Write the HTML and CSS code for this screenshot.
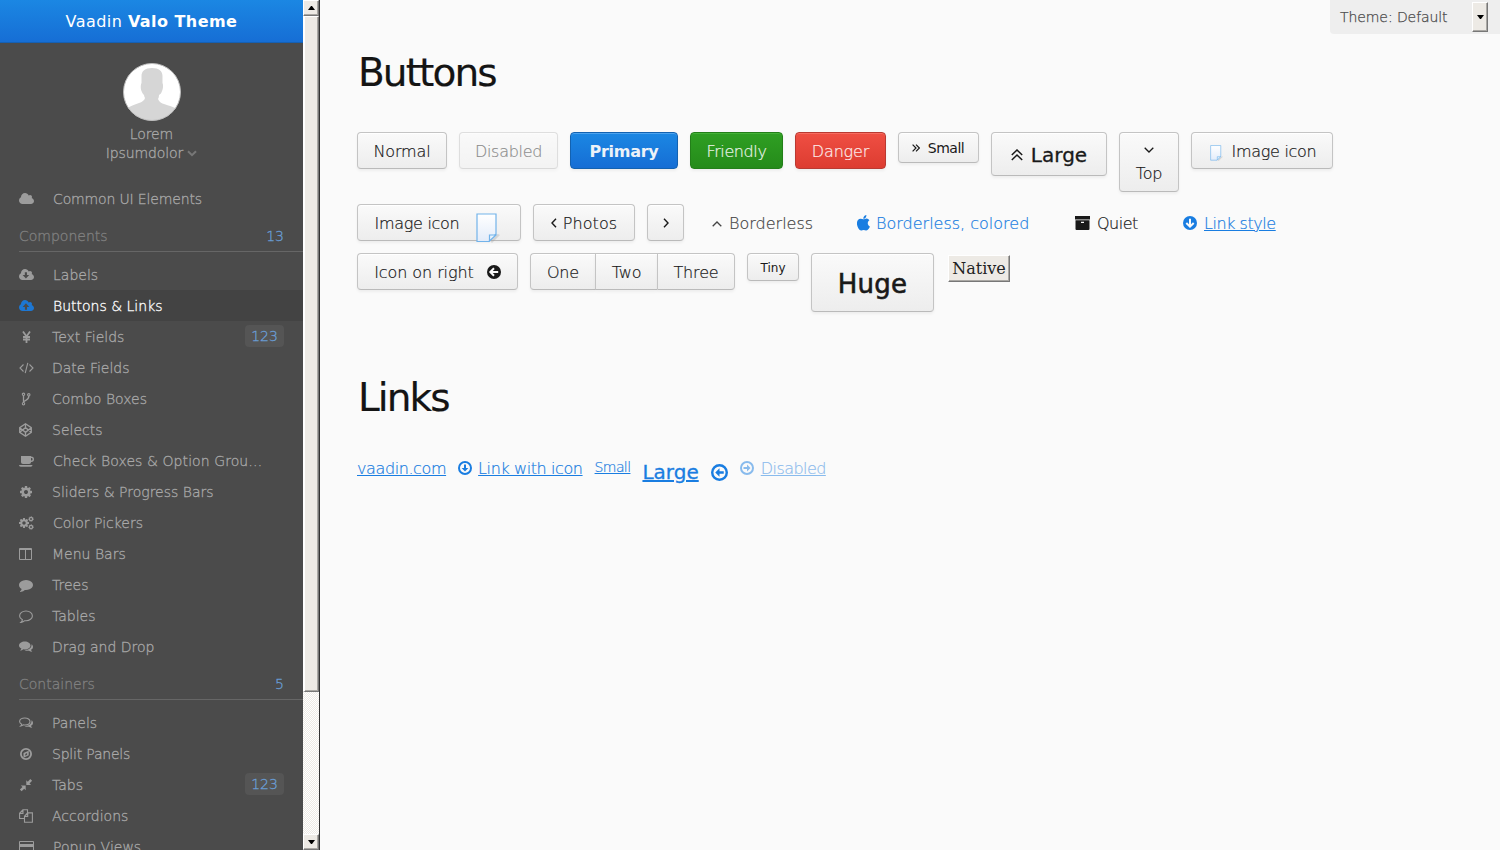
FILE: index.html
```html
<!DOCTYPE html>
<html lang="en">
<head>
<meta charset="utf-8">
<title>Vaadin Valo Theme</title>
<link rel="stylesheet" href="styles.css">
</head>
<body>
<svg class="sprite" width="0" height="0">
  <defs>
  <symbol id="cloud" viewBox="64 0 1920 1792"><path id="cloudp" d="M1984 1152q0 159-112.500 271.500t-271.500 112.500h-1088q-185 0-316.500-131.500t-131.500-316.500q0-132 71-241.500t187-163.500q-2-28-2-43 0-212 150-362t362-150q158 0 286.500 88t187.500 230q70-62 166-62 106 0 181 75t75 181q0 75-41 138 129 30 213 134.500t84 239.500z"/></symbol>
  <symbol id="cloud-down" viewBox="64 0 1920 1792"><use href="#cloudp"/><path class="cut" d="M810 540h270v360h290l-420 450-420-450h280z"/></symbol>
  <symbol id="cloud-up" viewBox="64 0 1920 1792"><use href="#cloudp"/><path class="cut" d="M820 1370h270V1010h290L955 540 530 1010h290z"/></symbol>
  <symbol id="yen" viewBox="0 0 15 14"><path class="ln" stroke-width="1.800" d="M4 1.500l3.500 5 3.500-5M7.500 6.500v6.500M4 7h7M4 9.500h7"/></symbol>
  <symbol id="code" viewBox="0 0 15 14"><path class="ln" stroke-width="1.100" d="M4.500 3.500L1 7l3.500 3.500M10.500 3.500L14 7l-3.500 3.500M8.800 1.800l-2.600 10.400"/></symbol>
  <symbol id="fork" viewBox="0 0 15 14"><path class="ln" stroke-width="1.300" d="M4.500 3.500v7M9.800 4c0 3-1 3.500-3 4.300-1.300.5-2.300 1-2.300 2.400"/><g class="ln" stroke-width="1.100"><circle cx="4.500" cy="2.300" r="1.200"/><circle cx="9.800" cy="2.800" r="1.200"/><circle cx="4.500" cy="11.700" r="1.200"/></g></symbol>
  <symbol id="codepen" viewBox="0 0 15 14"><path class="ln" stroke-width="1.300" d="M6.500.800l5.800 3.900v4.600l-5.800 3.900-5.800-3.900V4.700zM6.500.800v3.900M6.500 9.300v3.900M.700 4.700l5.800 4.600 5.800-4.600M.700 9.300l5.800-4.600 5.800 4.600"/></symbol>
  <symbol id="coffee" viewBox="0 0 15 14"><path d="M2 2h10v6.200q0 1.800-1.800 1.800H4Q2 10 2 8.200zM0 11h13.500q0 1.800-1.800 1.800H1.800Q0 12.800 0 11z"/><path class="ln" stroke-width="1.400" d="M11.500 3.200h.8a2 2 0 0 1 0 4h-.8"/></symbol>
  <symbol id="cog" viewBox="128 128 1536 1536"><path d="M1152 896q0-106-75-181t-181-75-181 75-75 181 75 181 181 75 181-75 75-181zm512-109v222q0 12-8 23t-20 13l-185 28q-19 54-39 91 35 50 107 138 10 12 10 25t-9 23q-27 37-99 108t-94 71q-12 0-26-9l-138-108q-44 23-91 38-16 136-29 186-7 28-36 28h-222q-14 0-24.500-8.500t-11.500-21.500l-28-184q-49-16-90-37l-141 107q-10 9-25 9-14 0-25-11-126-114-165-168-7-10-7-23 0-12 8-23 15-21 51-66.500t54-70.500q-27-50-41-99l-183-27q-13-2-21-12.500t-8-23.500v-222q0-12 8-23t19-13l186-28q14-46 39-92-40-57-107-138-10-12-10-24 0-10 9-23 26-36 98.500-107.500t94.500-71.500q13 0 26 10l138 107q44-23 91-38 16-136 29-186 7-28 36-28h222q14 0 24.500 8.500t11.500 21.500l28 184q49 16 90 37l142-107q9-9 24-9 13 0 25 10 129 119 165 170 7 8 7 22 0 12-8 23-15 21-51 66.500t-54 70.500q26 50 41 98l183 28q13 2 21 12.500t8 23.500z"/></symbol>
  <symbol id="gears" viewBox="0 0 15 14"><use href="#cog" x="0" y="2" width="10" height="10"/><g class="ln"><circle cx="12" cy="3" r="1.600" stroke-width="1.300"/><circle cx="12" cy="11" r="1.600" stroke-width="1.300"/><circle cx="12" cy="3" r="2.400" stroke-width=".8" stroke-dasharray="1 1"/><circle cx="12" cy="11" r="2.400" stroke-width=".8" stroke-dasharray="1 1"/></g></symbol>
  <symbol id="columns" viewBox="0 0 15 14"><path fill-rule="evenodd" d="M1 1h11q1 0 1 1v10q0 1-1 1H1q-1 0-1-1V2q0-1 1-1zm0 2v9h5V3zm6 0v9h5V3z"/></symbol>
  <symbol id="comment" viewBox="0 0 1920 1792"><path d="M1792 896q0 174-120 321.500t-326 233-450 85.500q-70 0-145-8-198 175-460 242-49 14-114 22-17 2-30.500-9t-17.500-29v-1q-3-4-.5-12t2-10 4.500-9.500l6-9 7-8.500 8-9q7-8 31-34.500t34.500-38 31-39.500 32.500-51 27-59 26-76q-157-89-247.500-220t-90.500-281q0-130 71-248.500t191-204.500 286-136.500 348-50.500q244 0 450 85.500t326 233 120 321.500z"/></symbol>
  <symbol id="comment-o" viewBox="0 0 15 14"><path class="ln" stroke-width="1.100" d="M7 2c3.600 0 6.400 2.200 6.400 4.900S10.600 11.700 7 11.700H5.800c-1.200 1-2.500 1.600-4 1.800 1-.9 1.500-1.700 1.600-2.800C1.600 9.800.6 8.500.6 6.900.6 4.200 3.400 2 7 2z"/></symbol>
  <symbol id="comments" viewBox="0 0 15 14"><path d="M5.800 1.500c3.200 0 5.700 1.700 5.700 4s-2.500 4-5.700 4c-.5 0-1-.1-1.400-.2-1 .8-2 1.200-3.400 1.200.8-.6 1.300-1.200 1.400-2C1 7.800 0 6.800 0 5.500c0-2.300 2.600-4 5.800-4zM12.500 4.200c1 .7 1.500 1.600 1.500 2.700 0 1.200-.8 2.200-2 2.900.1.900.6 1.400 1.300 2-1.400 0-2.500-.4-3.400-1.100-1.600.3-3 .1-4.300-.5 4-.1 7.300-2.400 6.900-6z"/></symbol>
  <symbol id="comments-o" viewBox="0 0 15 14"><path class="ln" stroke-width="1.100" d="M5.800 2c3 0 5.200 1.500 5.200 3.500S8.800 9 5.800 9c-.5 0-1 0-1.500-.1-.8.600-1.500.9-2.500 1.100.5-.5.900-1.100.9-1.800C1.300 7.500.6 6.600.6 5.500.6 3.500 2.800 2 5.800 2z"/><path d="M12.500 4.200c1 .7 1.500 1.600 1.500 2.700 0 1.200-.8 2.200-2 2.900.1.900.6 1.400 1.300 2-1.400 0-2.500-.4-3.400-1.100-1.600.3-3 .1-4.300-.5 4-.1 7.300-2.400 6.900-6z"/></symbol>
  <symbol id="compass" viewBox="0 0 15 14"><circle class="ln" stroke-width="1.800" cx="7" cy="7" r="5.100"/><path fill-rule="evenodd" d="M9.700 3.700v4.600l-5.200 2.400V6.100zM6.300 7.100v1.700l1.800-1V6.100z"/></symbol>
  <symbol id="compress" viewBox="0 0 15 14"><path d="M7.300 2.200v4.800h4.800L10.500 5.400l2.600-2.600-1.800-1.800-2.500 2.700zM6.700 12.200v-4.800h-4.800l1.600 1.600-2.600 2.500 1.700 1.700 2.600-2.500z"/></symbol>
  <symbol id="copy" viewBox="0 0 15 14"><path class="ln" stroke-width="1.100" d="M5 9.500H.6V4.200L3.900.8h4.600V4M4 .8V4.400H.6M8.600 3.900h4.800v9.300H5.500V7.200zM8.700 4v3.400H5.500"/></symbol>
  <symbol id="card" viewBox="0 0 15 14"><path fill-rule="evenodd" d="M1 1h13q1 0 1 1v10q0 1-1 1H1q-1 0-1-1V2q0-1 1-1zm0 1v2h13V2zm0 5v5h13V7z"/></symbol>
  <symbol id="down" viewBox="0 0 14 14"><circle cx="7" cy="7" r="7"/><path class="lnw" d="M7 2.800v7.500M3.300 7L7 10.700 10.700 7"/></symbol>
  <symbol id="left" viewBox="0 0 14 14"><circle cx="7" cy="7" r="7"/><path class="lnw" d="M11.200 7H3.700M7 3.300L3.300 7 7 10.700"/></symbol>
  <symbol id="o-down" viewBox="0 0 14 14"><circle class="ln" stroke-width="2" cx="7" cy="7" r="6"/><path d="M6 3.500h2V7h2.400L7 10.500 3.600 7H6z"/></symbol>
  <symbol id="o-left" viewBox="0 0 14 14"><circle class="ln" stroke-width="2" cx="7" cy="7" r="6"/><path d="M10.500 6v2H7v2.400L3.500 7 7 3.600V6z"/></symbol>
  <symbol id="o-right" viewBox="0 0 14 14"><circle class="ln" stroke-width="2" cx="7" cy="7" r="6"/><path d="M3.500 6v2H7v2.400L10.500 7 7 3.600V6z"/></symbol>
  <symbol id="apple" viewBox="200 0 1400 1700"><path d="M1585 1215q-39 125-123 250-129 196-257 196-49 0-140-32-86-32-151-32-61 0-142 33-81 34-132 34-152 0-301-259-147-261-147-503 0-228 113-374 113-144 284-144 72 0 177 30 104 30 138 30 45 0 143-34 102-34 173-34 119 0 213 65 52 36 104 100-79 67-114 118-65 94-65 207 0 124 69 223t158 126zm-376-1173q0 61-29 136-30 75-93 138-54 54-108 72-37 11-104 17 3-149 78-257 74-107 250-148 1 3 2.500 11t2.500 11q0 4 .5 10t.5 10z"/></symbol>
  <symbol id="archive" viewBox="0 0 15 14"><path fill-rule="evenodd" d="M0 0h15v3.500H0zM.5 4.200h14V13q0 1-1 1h-12q-1 0-1-1zM6 5.700v1.200h3V5.700z"/></symbol>
  <symbol id="page" viewBox="0 0 24 30"><path d="M14 28l8-7 2 1-8 8z" fill="#999" opacity=".3"/><path d="M1 1h19v20l-7 7.500H1z" fill="url(#pg)" stroke="#72b3ea" stroke-width="1.200"/><path d="M13.500 28v-6H20z" fill="#e8f3fc" stroke="#72b3ea" stroke-width="1.200"/></symbol>
  <linearGradient id="pg" x2="0" y2="1"><stop stop-color="#fff"/><stop offset="1" stop-color="#e3ecfa"/></linearGradient>
  </defs>
</svg>
<div class="app">
  <aside class="side">
    <div class="menu">
      <div class="title"><span>Vaadin <b>Valo Theme</b></span></div>
      <div class="user">
        <svg class="avatar" viewBox="0 0 58 58"><defs><clipPath id="av"><circle cx="29" cy="29" r="28.500"/></clipPath></defs><circle cx="29" cy="29" r="28.500" fill="#fff"/><path clip-path="url(#av)" fill="#d6d6d6" d="M29 5c7 0 10.500 3 10.500 8v7c1 2 .5 6-.5 8-.5 2-1.500 3-3 4 0 2-.5 3-1 4 1 3 4 4.500 6 5 5 1.500 9 3 13 5V60H4V45c4-2 8-3.500 12-5 3-1 5.500-2.500 6-5-.5-1-1-2-1-3-1.500-1-2-3-2.500-4-1-2-1-6 0-8v-7c0-5 3.500-8 10.500-8z"/><circle cx="29" cy="29" r="28.500" fill="none" stroke="#bbb"/></svg>
        <div>Lorem</div>
        <div class="drop">Ipsumdolor <svg width="10" height="7" viewBox="0 0 10 7"><path class="ln" stroke-width="2" d="M1 1.200l4 4 4-4"/></svg></div>
      </div>
      <div class="item first"><svg><use href="#cloud"/></svg><span>Common UI Elements</span></div>
      <div class="sec"><span>Components</span><i>13</i></div>
      <div class="item"><svg><use href="#cloud-down"/></svg><span>Labels</span></div>
      <div class="item on"><svg><use href="#cloud-up"/></svg><span>Buttons &amp; Links</span></div>
      <div class="item n"><svg><use href="#yen"/></svg><span>Text Fields</span><em>123</em></div>
      <div class="item n"><svg><use href="#code"/></svg><span>Date Fields</span></div>
      <div class="item n"><svg><use href="#fork"/></svg><span>Combo Boxes</span></div>
      <div class="item n"><svg><use href="#codepen"/></svg><span>Selects</span></div>
      <div class="item"><svg><use href="#coffee"/></svg><span class="wide">Check Boxes &amp; Option Grou…</span></div>
      <div class="item n"><svg><use href="#cog" x="1" y="1" width="12" height="12"/></svg><span>Sliders &amp; Progress Bars</span></div>
      <div class="item"><svg><use href="#gears"/></svg><span>Color Pickers</span></div>
      <div class="item n"><svg><use href="#columns"/></svg><span>Menu Bars</span></div>
      <div class="item n"><svg><use href="#comment"/></svg><span>Trees</span></div>
      <div class="item n"><svg><use href="#comment-o"/></svg><span>Tables</span></div>
      <div class="item n"><svg><use href="#comments"/></svg><span>Drag and Drop</span></div>
      <div class="sec"><span>Containers</span><i>5</i></div>
      <div class="item n"><svg><use href="#comments-o"/></svg><span>Panels</span></div>
      <div class="item n tight"><svg><use href="#compass"/></svg><span>Split Panels</span></div>
      <div class="item n"><svg><use href="#compress"/></svg><span>Tabs</span><em>123</em></div>
      <div class="item n"><svg><use href="#copy"/></svg><span>Accordions</span></div>
      <div class="item"><svg><use href="#card"/></svg><span>Popup Views</span></div>
    </div>
    <div class="scroll">
      <div class="arrow"><svg width="7" height="4"><path d="M3 0h1l3 4H0z"/></svg></div>
      <div class="thumb"></div>
      <div class="arrow end"><svg width="7" height="4"><path d="M3 4h1l3-4H0z"/></svg></div>
    </div>
  </aside>
  <main class="main">
    <div class="theme"><span>Theme: Default</span><div class="dd"><svg width="7" height="4"><path d="M3 4h1l3-4H0z"/></svg></div></div>
    <h1>Buttons</h1>
    <div class="row r1">
      <div class="btn b-normal">Normal</div>
      <div class="btn b-disabled">Disabled</div>
      <div class="btn b-primary">Primary</div>
      <div class="btn b-friendly">Friendly</div>
      <div class="btn b-danger">Danger</div>
      <div class="btn b-small"><svg width="8" height="8" viewBox="0 0 8 8"><path class="ln" stroke-width="1.200" d="M.6.600L4 4 .6 7.400M4 .6L7.400 4 4 7.400"/></svg>Small</div>
      <div class="btn b-large"><svg width="12" height="12" viewBox="0 0 12 12"><path class="ln" stroke-width="1.500" d="M.800 6L6 1l5.200 5M.800 11L6 6l5.200 5"/></svg>Large</div>
      <div class="btn b-top"><svg width="10" height="6" viewBox="0 0 10 6"><path class="ln" stroke-width="1.300" d="M.700.800L5 5 9.300.800"/></svg><span>Top</span></div>
      <div class="btn b-img"><svg width="13" height="16"><use href="#page"/></svg>Image icon</div>
    </div>
    <div class="row r2">
      <div class="btn b-img2">Image icon<svg width="24" height="30"><use href="#page"/></svg></div>
      <div class="btn b-photos"><svg width="6" height="10" viewBox="0 0 6 10"><path class="ln" stroke-width="1.400" d="M5 .800L1 5l4 4.200"/></svg>Photos</div>
      <div class="btn b-next"><svg width="6" height="10" viewBox="0 0 6 10"><path class="ln" stroke-width="1.400" d="M1 .800L5 5 1 9.200"/></svg></div>
      <div class="flat f1"><svg width="10" height="6" viewBox="0 0 10 6"><path class="ln" stroke-width="1.300" d="M.700 5.200L5 1l4.300 4.200"/></svg><span>Borderless</span></div>
      <div class="flat f2"><svg width="13" height="16"><use href="#apple"/></svg><span>Borderless, colored</span></div>
      <div class="flat f3"><svg width="15" height="14"><use href="#archive"/></svg><span>Quiet</span></div>
      <div class="flat f4"><svg width="14" height="14"><use href="#down"/></svg><u>Link style</u></div>
    </div>
    <div class="row r3">
      <div class="btn b-right">Icon on right<svg width="14" height="14"><use href="#left"/></svg></div>
      <div class="group"><div class="btn">One</div><div class="btn">Two</div><div class="btn">Three</div></div>
      <div class="btn b-tiny">Tiny</div>
      <div class="btn b-huge">Huge</div>
      <div class="native">Native</div>
    </div>
    <h1 class="h-links">Links</h1>
    <div class="links">
      <u class="l1">vaadin.com</u>
      <svg class="i1" width="14" height="14"><use href="#o-down"/></svg><u class="l2">Link with icon</u>
      <u class="l3">Small</u>
      <u class="l4">Large</u><svg class="i2" width="17" height="17"><use href="#o-left"/></svg>
      <svg class="i3 dim" width="14" height="14"><use href="#o-right"/></svg><u class="l5 dim">Disabled</u>
    </div>
  </main>
</div>
</body>
</html>
```
FILE: styles.css
```css
* { box-sizing: border-box; }
body { margin: 0; background: #fafafa; font-family: "DejaVu Sans", sans-serif; font-weight: 200; overflow: hidden; }
.sprite { position: absolute; }
svg { display: block; flex: none; fill: currentColor; }
.ln { fill: none; stroke: currentColor; }
.lnw { fill: none; stroke: #fafafa; stroke-width: 2; }
.cut { fill: #4b4b4b; }
.app { display: flex; width: 1500px; height: 850px; overflow: hidden; }
.side { display: flex; width: 320px; flex: none; background: #4b4b4b; height: 850px; }
.menu { width: 303px; height: 850px; overflow: hidden; color: #a8a8a8; font-size: 14px; -webkit-text-stroke: .3px currentColor; }
.title { height: 43px; background: linear-gradient(#1b87e3, #166ed5); border-bottom: 1px solid #1660b2; color: #fff; font-size: 16px; font-weight: 400; text-align: center; line-height: 44px; letter-spacing: .45px; -webkit-text-stroke: 0; }
.title b { font-weight: 700; }
.user { height: 140px; padding-top: 20px; text-align: center; line-height: 19px; letter-spacing: -.1px; }
.avatar { width: 58px; height: 58px; margin: 0 auto 4px 123px; }
.drop { display: flex; justify-content: center; align-items: center; gap: 4px; }
.drop svg { color: #777; }
.item { display: flex; align-items: center; height: 31px; padding: 0 19px; white-space: nowrap; }
.item svg { width: 15px; height: 14px; margin-right: 19px; color: #9c9c9c; }
.item.n svg { margin-right: 18px; }
.first { letter-spacing: -.15px; }
.tight { letter-spacing: -.2px; }
.wide { letter-spacing: .08px; }
.item.on { background: #434343; color: #fff; }
.item.on svg { color: #1d77d3; }
.item em { margin-left: auto; width: 39px; height: 22px; border-radius: 4px; background: #555; color: #6a9fd8; font-style: normal; line-height: 22px; letter-spacing: 0; text-align: center; margin-bottom: 2px; }
.sec { height: 38px; margin: 0 0 7px 19px; padding-right: 19px; border-bottom: 1px solid #666; display: flex; justify-content: space-between; color: #808080; line-height: 44px; }
.sec i { font-style: normal; color: #6a9fd8; }
.scroll { width: 17px; background: repeating-conic-gradient(#fff 0 25%, #edeae5 0 50%) 0 0 / 2px 2px; border-right: 1px solid #333; display: flex; flex-direction: column; }
.arrow, .thumb, .dd { background: #edeae5; border: 1px solid; border-color: #fff #777 #777 #fff; box-shadow: inset -1px -1px #aaa8a4; }
.arrow { height: 16px; display: flex; align-items: center; justify-content: center; color: #000; }
.thumb { height: 676px; border-left-width: 2px; }
.end { margin-top: auto; }
.main { position: relative; flex: 1; padding-left: 37px; }
.theme { position: absolute; right: 0; top: 0; width: 170px; height: 34px; background: #eee; border-radius: 0 0 0 4px; display: flex; justify-content: space-between; padding: 2px 12px 2px 10px; font-size: 14px; color: #474747; line-height: 30px; letter-spacing: -.08px; -webkit-text-stroke: .25px currentColor; }
.dd { width: 16px; height: 30px; display: flex; align-items: center; justify-content: center; color: #000; }
h1 { margin: 45px 0 0 1px; height: 56px; line-height: 56px; font-size: 39px; font-weight: 400; letter-spacing: -1.9px; color: #141414; -webkit-text-stroke: .2px currentColor; }
.row { display: flex; align-items: flex-start; gap: 12px; font-size: 16px; color: #191919; letter-spacing: -.16px; -webkit-text-stroke: .2px currentColor; }
.r1 { margin-top: 31px; height: 72px; }
.r2 { height: 49px; }
.r3 { height: 60px; }
.btn { display: flex; align-items: center; justify-content: center; height: 37px; padding-top: 2px; border: 1px solid #c4c4c4; border-bottom-color: #bababa; border-radius: 4px; background: linear-gradient(#fafafa, #ededed); box-shadow: 0 2px 3px rgba(0,0,0,.05), inset 0 1px #fff; white-space: nowrap; flex: none; }
.b-normal { width: 90px; }
.b-disabled { width: 99px; opacity: .5; letter-spacing: -.3px; }
.b-primary { width: 108px; font-weight: 700; letter-spacing: -.28px; -webkit-text-stroke: 0; color: #ecf2f8; background: linear-gradient(#1b87e3, #166ed5); border-color: #1362b1; box-shadow: 0 2px 3px rgba(0,0,0,.05), inset 0 1px #4da3ee; }
.b-friendly { width: 93px; letter-spacing: -.4px; color: #eaf4e9; background: linear-gradient(#2f9f23, #258b1a); border-color: #237f19; box-shadow: 0 2px 3px rgba(0,0,0,.05), inset 0 1px #43b237; }
.b-danger { width: 91px; color: #fcebea; background: linear-gradient(#ef4f43, #dd3c31); border-color: #b93a32; box-shadow: 0 2px 3px rgba(0,0,0,.05), inset 0 1px #f76c61; }
.b-small { width: 81px; height: 31px; padding: 0 1px 0 0; font-size: 14px; font-weight: 400; gap: 8px; letter-spacing: -.5px; -webkit-text-stroke: 0; }
.b-large { width: 116px; height: 44px; font-size: 20px; font-weight: 400; gap: 8px; letter-spacing: 0; -webkit-text-stroke: .3px currentColor; }
.b-top { width: 60px; height: 60px; flex-direction: column; gap: 11px; padding-top: 5px; }
.b-img { width: 142px; gap: 9px; padding-left: 1px; letter-spacing: -.3px; }
.b-img svg { margin: 3px 0 0 1px; }
.b-img2 { width: 164px; gap: 17px; padding-right: 3px; letter-spacing: -.3px; }
.b-img2 svg { margin-top: 8px; }
.b-photos { width: 102px; gap: 6px; letter-spacing: .1px; }
.b-photos svg, .b-next svg, .b-right svg, .flat svg { margin-bottom: 2px; }
.b-next { width: 37px; padding-top: 3px; }
.flat { display: flex; align-items: center; height: 37px; white-space: nowrap; padding: 2px 0 0 16px; letter-spacing: 0; }
.flat.f1 svg { margin: 0; }
.f1 { width: 133px; gap: 7px; color: #444; }
.f2 { width: 204px; gap: 6px; color: #197de1; }
.f3 { width: 97px; padding-left: 18px; gap: 7px; letter-spacing: -.5px; }
.f4 { padding-left: 17px; gap: 7px; color: #197de1; letter-spacing: -.45px; }
.b-right { width: 161px; gap: 13px; letter-spacing: -.08px; }
.group { display: flex; }
.group .btn { width: 78px; border-radius: 0 4px 4px 0; }
.group .btn:nth-child(1) { width: 65px; border-right: 0; border-radius: 4px 0 0 4px; }
.group .btn:nth-child(2) { width: 62px; border-right: 0; border-radius: 0; }
.b-tiny { width: 52px; height: 28px; font-size: 12px; font-weight: 400; -webkit-text-stroke: 0; letter-spacing: 0; }
.b-huge { width: 123px; height: 59px; font-size: 26px; font-weight: 400; letter-spacing: .3px; -webkit-text-stroke: .6px currentColor; }
.native { width: 62px; height: 27px; margin: 2px 0 0 2px; background: #edeae5; border: 1px solid; border-color: #fff #777 #777 #fff; box-shadow: inset -1px -1px #aaa8a4; font: 400 16px/25px "DejaVu Serif", serif; text-align: center; color: #222; letter-spacing: 0; -webkit-text-stroke: 0; }
.h-links { margin-top: 57px; }
.links { display: flex; align-items: flex-start; margin-top: 30px; font-size: 16px; line-height: 26px; color: #197de1; white-space: nowrap; letter-spacing: -.4px; -webkit-text-stroke: .2px currentColor; }
.i1 { margin: 5px 6px 0 12px; }
.l3 { font-size: 14px; line-height: 22px; margin-left: 12px; letter-spacing: -.6px; }
.l4 { font-size: 20px; line-height: 32px; font-weight: 400; margin-left: 12px; letter-spacing: 0; -webkit-text-stroke: .3px currentColor; }
.i2 { margin: 8px 0 0 12px; }
.i3 { margin: 5px 7px 0 12px; }
.l5 { letter-spacing: -.55px; }
.dim { opacity: .5; }
```
